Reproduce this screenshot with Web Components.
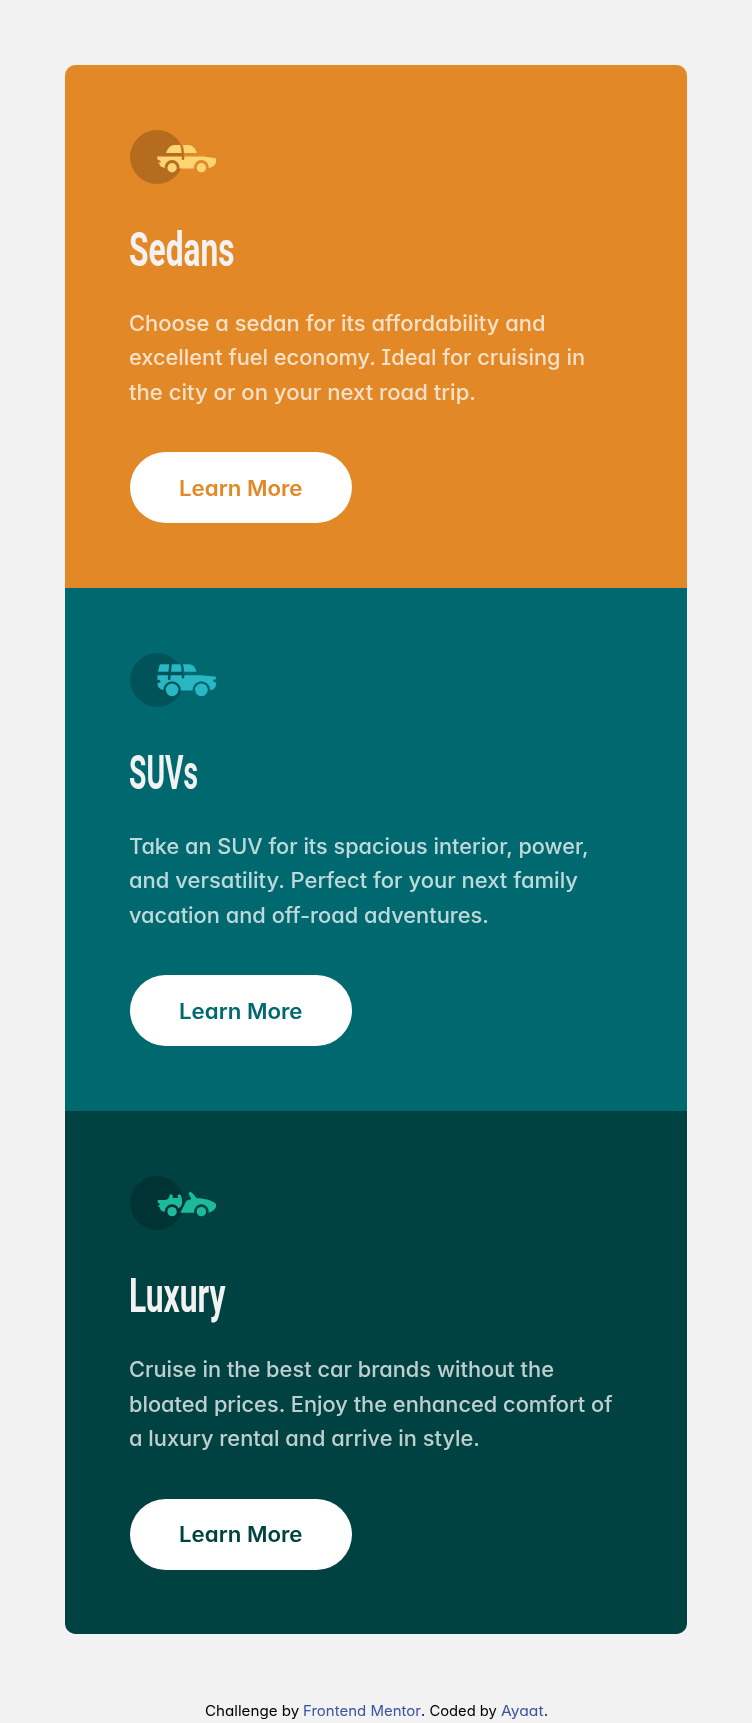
<!DOCTYPE html>
<html lang="en">
<head>
<meta charset="utf-8">
<title>3-column preview card</title>
<style>
body{margin:0;background:#f2f2f2;font-family:Inter,"Open Sans",sans-serif;font-feature-settings:"cv11","cv08"}
</style>
</head>
<body>
<car-page>
  <car-card kind="sedan" style="--bg:#e38826">
    <fit-text slot="title" width="105.5">Sedans</fit-text>
    <fit-text width="416.5">Choose a sedan for its affordability and</fit-text>
    <fit-text width="456">excellent fuel economy. Ideal for cruising in</fit-text>
    <fit-text width="347">the city or on your next road trip.</fit-text>
  </car-card>
  <car-card kind="suv" style="--bg:#006970">
    <fit-text slot="title" width="69">SUVs</fit-text>
    <fit-text width="459.5">Take an SUV for its spacious interior, power,</fit-text>
    <fit-text width="449">and versatility. Perfect for your next family</fit-text>
    <fit-text width="360">vacation and off-road adventures.</fit-text>
  </car-card>
  <car-card kind="luxury" style="--bg:#004241">
    <fit-text slot="title" width="96.5">Luxury</fit-text>
    <fit-text width="425">Cruise in the best car brands without the</fit-text>
    <fit-text width="483.5">bloated prices. Enjoy the enhanced comfort of</fit-text>
    <fit-text width="351">a luxury rental and arrive in style.</fit-text>
  </car-card>
  <site-credit slot="footer"></site-credit>
</car-page>
<script>
/* One line of text set to a given measure by stretching or condensing it. */
customElements.define('fit-text', class extends HTMLElement {
  connectedCallback() {
    if (this.shadowRoot) return;
    this.attachShadow({mode: 'open'}).innerHTML =
      '<style>:host{display:block;white-space:nowrap;text-align:left}span{display:inline-block;transform-origin:0 50%}</style><span><slot></slot></span>';
    requestAnimationFrame(() => this.fit());
  }
  fit() {
    const s = this.shadowRoot.querySelector('span');
    const want = +this.getAttribute('width'), has = s.getBoundingClientRect().width;
    this.style.width = want + 'px';
    s.style.transform = `scaleX(${want / has})`;
  }
});

const ICONS = {
  sedan: {y: 28.8, color: '#ffd473', body: `
    <mask id="m"><rect width="300" height="200" fill="#fff"/><g fill="#000"><circle cx="155" cy="141" r="22"/><circle cx="243" cy="141" r="22"/></g><path d="M181 68Q189 86 188 115" fill="none" stroke="#000" stroke-width="8" stroke-linecap="round"/></mask>
    <g mask="url(#m)"><path d="M137 98Q145 74 162 74H204C218 75 227 87 229 98Z"/>
    <path d="M111 108H250L282 113Q288 114 288 120C286 134 280 138 269 142L262 144H135L122 138Q117 136 117 129L112 126H121Q122 119 113 119Q109 114 111 108Z"/></g>
    <circle cx="155" cy="142" r="14"/><circle cx="243" cy="142" r="14"/>`},
  suv: {y: 23.4, color: '#2ab7c4', body: `
    <mask id="m"><rect width="300" height="200" fill="#fff"/><g fill="#000"><circle cx="155" cy="134" r="26"/><circle cx="243" cy="134" r="26"/></g><path d="M151 50L146 101M182 50Q189 70 188 96" fill="none" stroke="#000" stroke-width="8" stroke-linecap="round"/></mask>
    <g mask="url(#m)"><path d="M120 57H206C220 58 226 69 228 80H113L117 61Z"/>
    <path d="M111 90H240L284 94Q288 95 288 102L279 104Q276 112 288 112Q287 131 274 134L263 136H133Q111 132 111 114L120 111Q122 103 111 104Z"/></g>
    <circle cx="155" cy="134" r="19"/><circle cx="243" cy="134" r="19"/>`},
  luxury: {y: 24, color: '#1cbb9b', body: `
    <mask id="m"><rect width="300" height="200" fill="#fff"/><g fill="#000"><circle cx="155" cy="131" r="22"/><circle cx="243" cy="131" r="22"/></g></mask>
    <g mask="url(#m)"><path d="M112 96H132Q145 96 147 83Q151 75 157 82V90H174L171 84Q174 76 181 81Q190 103 181 116L172 122 160 128H140L131 132L121 127L117 116H112L119 108Q113 106 112 103Z"/>
    <path d="M198 98L213 93L205 79Q205 69 215 74L229 91C256 91 279 99 288 109C289 120 279 130 265 134H180Z"/></g>
    <circle cx="155" cy="131" r="14"/><circle cx="243" cy="131" r="14"/>`}
};

customElements.define('car-icon', class extends HTMLElement {
  connectedCallback() {
    const i = ICONS[this.getAttribute('kind')];
    this.attachShadow({mode: 'open'}).innerHTML = `
      <style>:host{display:block;height:54px}svg{display:block}</style>
      <svg width="86.4" height="54" viewBox="28.8 ${i.y} 259.2 162">
        <circle cx="109.8" cy="${i.y + 81}" r="81" opacity=".2"/>
        <g fill="${i.color}">${i.body}</g>
      </svg>`;
  }
});

customElements.define('learn-button', class extends HTMLElement {
  connectedCallback() {
    this.attachShadow({mode: 'open'}).innerHTML = `
      <style>
        :host{display:block}
        button{box-sizing:border-box;display:flex;align-items:center;width:222.4px;height:71px;padding:1.8px 0 0 49px;border:0;border-radius:36px;background:#fff;color:var(--bg);font:600 21px/34px Inter,sans-serif;font-feature-settings:"cv11"}
      </style>
      <button><fit-text width="123.5">Learn More</fit-text></button>`;
  }
});

customElements.define('car-card', class extends HTMLElement {
  connectedCallback() {
    this.attachShadow({mode: 'open'}).innerHTML = `
      <style>
        :host{display:block;box-sizing:border-box;height:523.2px;padding:64.8px;background:var(--bg)}
        h2{margin:36px 0 27px -.5px;color:#f2f2f2;font:700 48.8px/60px Roboto,sans-serif}
        .copy{margin:0 0 41.9px -.6px;color:rgba(255,255,255,.75);font-size:21px;font-weight:450;line-height:34.56px}
      </style>
      <car-icon kind="${this.getAttribute('kind')}"></car-icon>
      <h2><slot name="title"></slot></h2>
      <div class="copy"><slot></slot></div>
      <learn-button></learn-button>`;
  }
});

customElements.define('site-credit', class extends HTMLElement {
  connectedCallback() {
    this.attachShadow({mode: 'open'}).innerHTML = `
      <style>
        :host{display:flex;justify-content:center;color:#000;font-size:14.4px;line-height:24px}
        a{color:#3e52a3;text-decoration:none}
      </style>
      <fit-text width="98.5">Challenge by&nbsp;</fit-text><a><fit-text width="118">Frontend Mentor</fit-text></a><fit-text width="80">. Coded by&nbsp;</fit-text><a><fit-text width="42.5">Ayaat</fit-text></a><fit-text width="4">.</fit-text>`;
  }
});

customElements.define('car-page', class extends HTMLElement {
  connectedCallback() {
    this.attachShadow({mode: 'open'}).innerHTML = `
      <style>
        :host{display:flex;flex-direction:column;box-sizing:border-box;height:1723px;padding:64.8px 64.8px 0;overflow:hidden}
        main{overflow:hidden;border-radius:10.8px}
        footer{margin-top:64.8px}
      </style>
      <main><slot></slot></main>
      <footer><slot name="footer"></slot></footer>`;
  }
});
</script>
</body>
</html>
